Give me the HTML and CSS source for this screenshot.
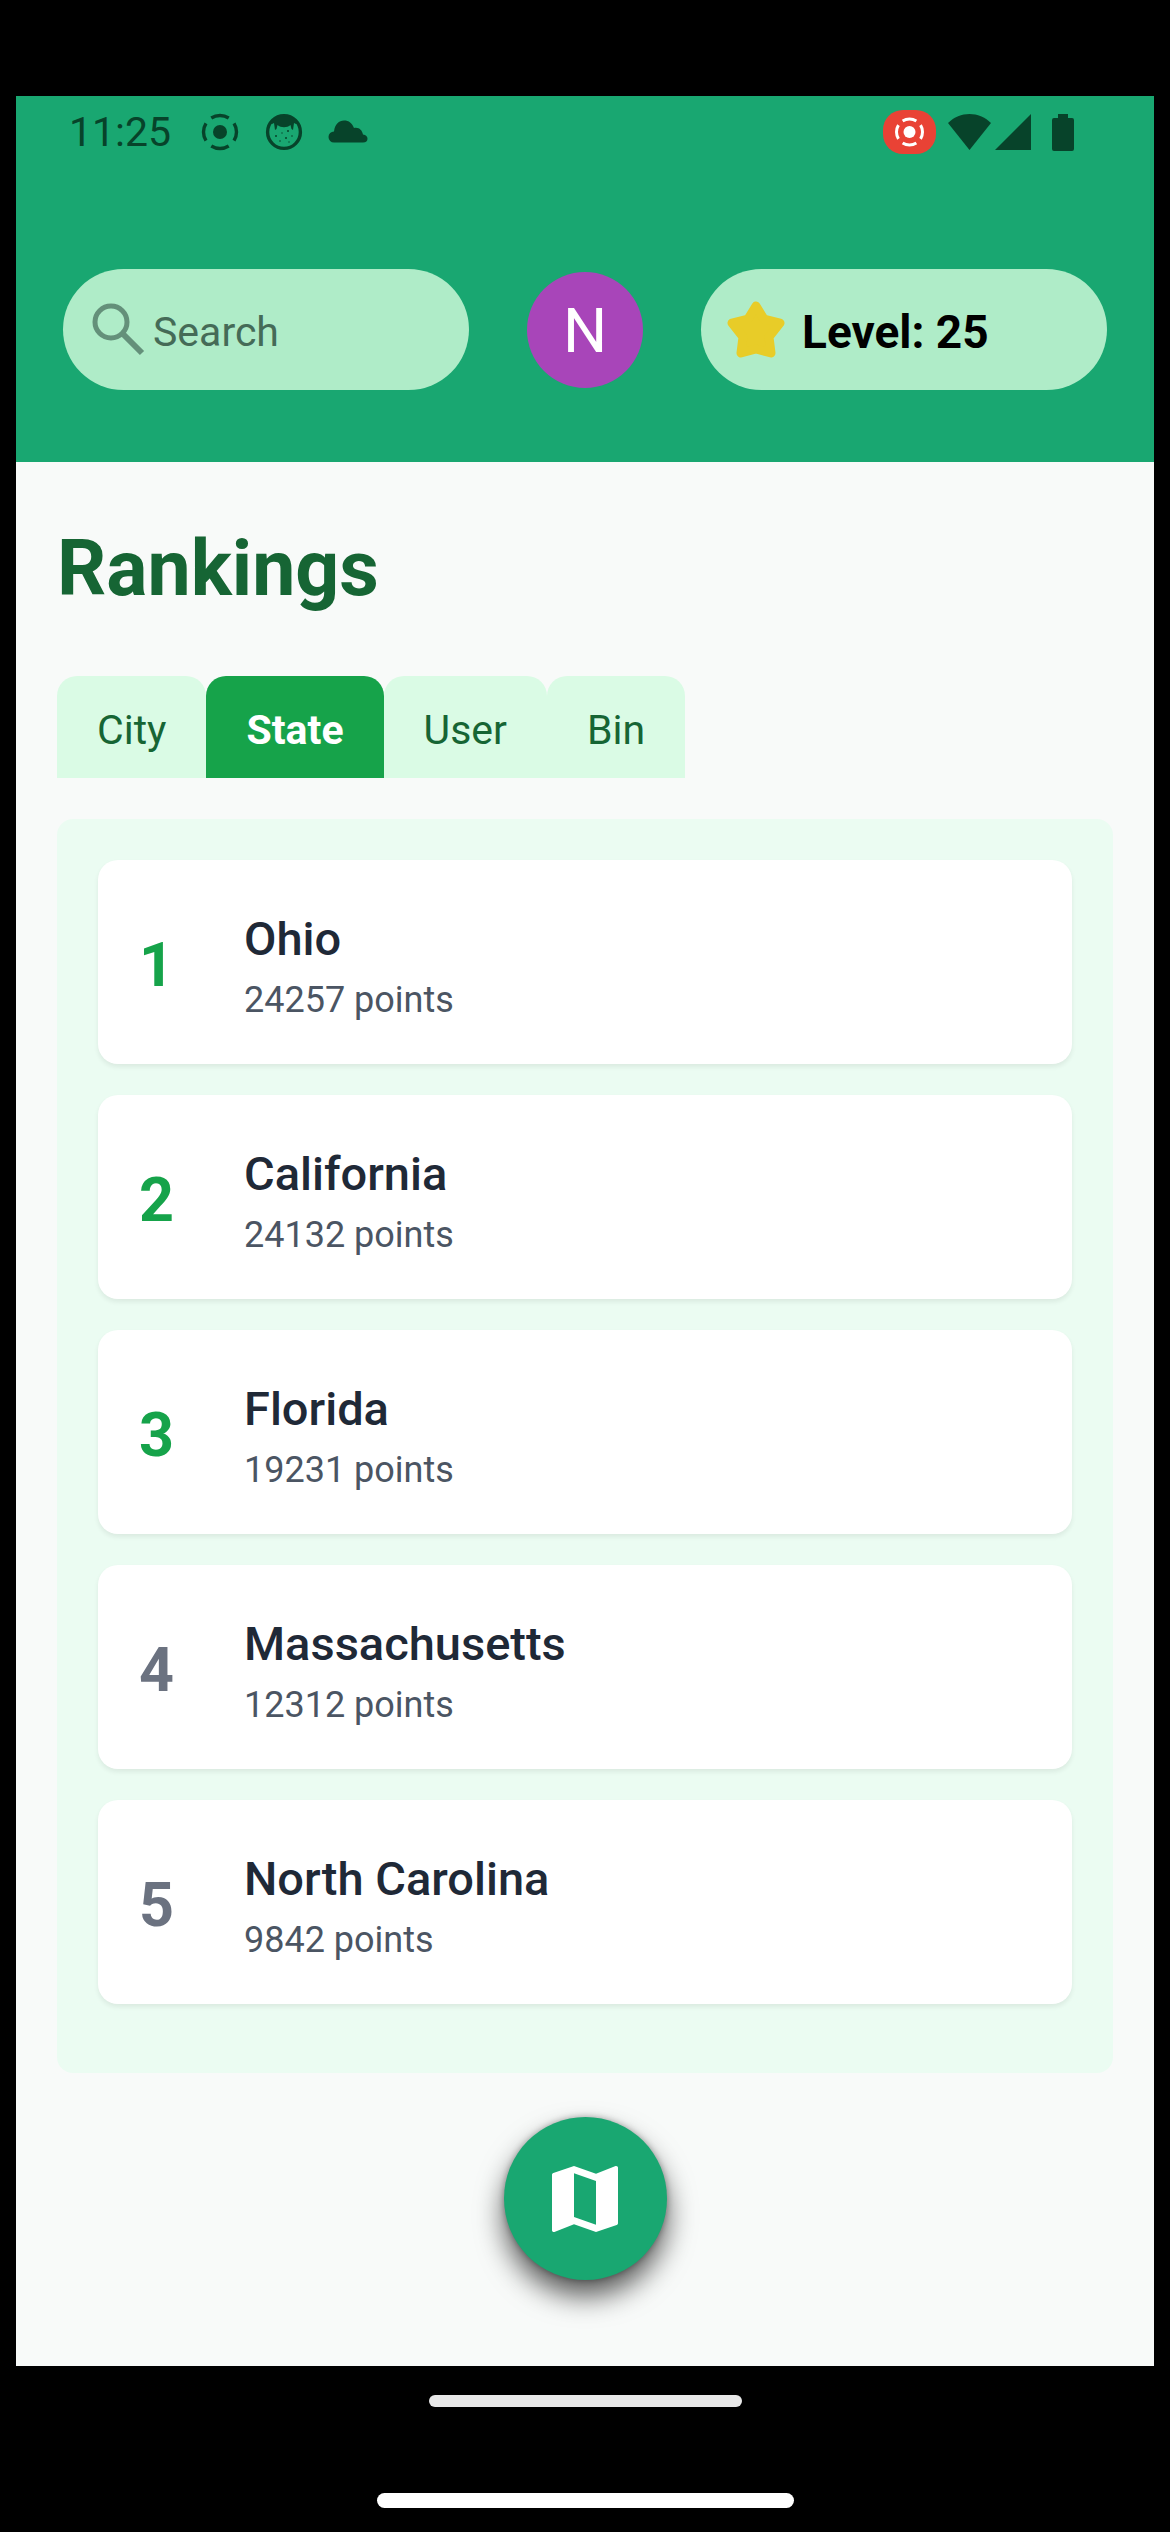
FILE: index.html
```html
<!DOCTYPE html>
<html lang="en">
<head>
<meta charset="utf-8">
<meta name="viewport" content="width=device-width, initial-scale=1">
<title>Rankings</title>
<link rel="stylesheet" href="styles.css">
</head>
<body>
<div class="screen">
  <header class="header">
    <div class="status">
      <span class="clock">11:25</span>
      <svg class="status-icon" viewBox="0 0 40 40" aria-hidden="true">
        <circle cx="20" cy="20" r="7" fill="currentColor"/>
        <circle cx="20" cy="20" r="16.5" fill="none" stroke="currentColor" stroke-width="3.4" pathLength="360" stroke-dasharray="64 26" stroke-dashoffset="-58"/>
      </svg>
      <svg class="status-icon" viewBox="0 0 40 40" aria-hidden="true">
        <circle cx="20" cy="20" r="16.4" fill="none" stroke="currentColor" stroke-width="3.4"/>
        <path d="M6 11C11 2 29 2 34 11L32 12L30 11L29 18L27.500 17L26.500 13C23 16 17 16 13.500 13L12.500 17L11 18L10 11L8 12Z" fill="currentColor"/>
        <g fill="currentColor"><circle cx="12" cy="24" r="1"/><circle cx="24" cy="19" r="1"/><circle cx="18" cy="21" r=".7"/><circle cx="28" cy="24" r=".8"/><circle cx="22" cy="26" r="1"/><circle cx="16" cy="29" r=".8"/><circle cx="25" cy="30" r=".7"/></g>
      </svg>
      <svg class="status-icon" viewBox="0 0 40 40" aria-hidden="true">
        <path d="M6 30.500A5.500 5.500 0 0 1 6 19.500C7 12 11 8.500 16 8.500C21 8.500 24 11 26 16C31 15 34 18 35 22.500C41 23 41 30.500 35 30.500Z" fill="currentColor"/>
      </svg>
      <svg class="record" viewBox="0 0 53 44" aria-hidden="true">
        <rect width="53" height="44" rx="20" fill="#e94235"/>
        <circle cx="26.500" cy="22" r="6" fill="#fff"/>
        <circle cx="26.500" cy="22" r="13" fill="none" stroke="#fff" stroke-width="3" pathLength="360" stroke-dasharray="64 26" stroke-dashoffset="-58"/>
      </svg>
      <svg class="wifi" viewBox="0 0 43 36" aria-hidden="true"><path d="M0 9C12-3 31-3 43 9L21.500 36Z" fill="currentColor"/></svg>
      <svg class="signal" viewBox="0 0 36 36" aria-hidden="true"><path d="M36 0V36H0Z" fill="currentColor"/></svg>
      <svg class="battery" viewBox="0 0 22 37" aria-hidden="true"><path d="M6 0H16V4H20Q22 4 22 6V35Q22 37 20 37H2Q0 37 0 35V6Q0 4 2 4H6Z" fill="currentColor"/></svg>
    </div>
    <div class="toolbar">
      <label class="pill search">
        <svg class="search-icon" viewBox="0 0 54 54" aria-hidden="true"><circle cx="20" cy="19" r="16" fill="none" stroke="currentColor" stroke-width="5"/><path d="M32 31L51 50" stroke="currentColor" stroke-width="6"/></svg>
        <input class="search-input" type="search" placeholder="Search" aria-label="Search">
      </label>
      <button class="avatar" type="button" aria-label="Profile">N</button>
      <div class="pill level">
        <svg class="star" viewBox="0 0 60 58" aria-hidden="true"><path d="M30 5L38 18L54 22L43 36L45 52L30 48L15 52L17 36L6 22L22 18Z" fill="currentColor" stroke="currentColor" stroke-width="9" stroke-linejoin="round"/></svg>
        <span class="level-text">Level: 25</span>
      </div>
    </div>
  </header>
  <main class="main">
    <h1 class="title">Rankings</h1>
    <div class="tabs" role="tablist">
      <button class="tab" type="button" role="tab" aria-selected="false">City</button>
      <button class="tab tab-active" type="button" role="tab" aria-selected="true">State</button>
      <button class="tab" type="button" role="tab" aria-selected="false">User</button>
      <button class="tab" type="button" role="tab" aria-selected="false">Bin</button>
    </div>
    <ol class="panel">
      <li class="card"><span class="rank rank-top">1</span><div class="info"><span class="name">Ohio</span><span class="points">24257 points</span></div></li>
      <li class="card"><span class="rank rank-top">2</span><div class="info"><span class="name">California</span><span class="points">24132 points</span></div></li>
      <li class="card"><span class="rank rank-top">3</span><div class="info"><span class="name">Florida</span><span class="points">19231 points</span></div></li>
      <li class="card"><span class="rank">4</span><div class="info"><span class="name">Massachusetts</span><span class="points">12312 points</span></div></li>
      <li class="card"><span class="rank">5</span><div class="info"><span class="name">North Carolina</span><span class="points">9842 points</span></div></li>
    </ol>
    <button class="fab" type="button" aria-label="Open map">
      <svg class="map-icon" viewBox="0 0 24 24" aria-hidden="true"><path fill="currentColor" d="M20.500 3l-.16.030L15 5.100 9 3 3.360 4.900c-.21.070-.36.250-.36.480V20.500c0 .28.220.5.500.5l.16-.03L9 18.900l6 2.100 5.640-1.900c.21-.07.360-.25.360-.48V3.500c0-.28-.22-.5-.5-.5zM15 19l-6-2.110V5l6 2.110V19z"/></svg>
    </button>
  </main>
</div>
<div class="system">
  <div class="handle"></div>
  <div class="home"></div>
</div>
</body>
</html>
```
FILE: styles.css
```css
* {
  box-sizing: border-box;
}

body {
  margin: 0;
  min-height: 100vh;
  padding: 96px 16px 24px;
  display: flex;
  flex-direction: column;
  background: #000;
  font-family: Roboto, "Liberation Sans", sans-serif;
}

button,
input {
  font: inherit;
  border: 0;
}

svg {
  display: block;
  flex: none;
}

.screen {
  flex: 1;
  background: #f8faf9;
}

.header {
  background: #19a771;
  padding-bottom: 72px;
}

.status {
  display: flex;
  align-items: center;
  height: 72px;
  padding: 0 80px 0 53px;
  color: #07432a;
}

.clock {
  font-size: 41px;
  line-height: 48px;
  margin-right: 5px;
}

.status-icon {
  width: 40px;
  height: 40px;
  margin-left: 24px;
}

.record {
  width: 53px;
  height: 44px;
  margin-left: auto;
}

.wifi {
  width: 43px;
  height: 36px;
  margin-left: 12px;
}

.signal {
  width: 36px;
  height: 36px;
  margin-left: 4px;
}

.battery {
  width: 22px;
  height: 37px;
  margin-left: 21px;
}

.toolbar {
  display: grid;
  grid-template-columns: 1fr auto 1fr;
  align-items: center;
  gap: 58px;
  padding: 101px 47px 0;
}

.pill {
  min-width: 0;
  height: 121px;
  display: flex;
  align-items: center;
  border-radius: 61px;
  background: #afecc8;
}

.search {
  gap: 8px;
  padding: 0 28px;
}

.search-icon {
  width: 54px;
  height: 54px;
  color: #64907a;
}

.search-input {
  flex: 1;
  min-width: 0;
  padding: 4px 0 0;
  background: none;
  outline: none;
  appearance: none;
  font-size: 41px;
  line-height: 48px;
  color: #456b57;
}

.search-input::placeholder {
  color: #456b57;
  opacity: 1;
}

.avatar {
  width: 116px;
  height: 116px;
  padding: 2px 0 0;
  border-radius: 50%;
  background: #a845b9;
  color: #fff;
  font-size: 62px;
  line-height: 72px;
}

.level {
  gap: 16px;
  padding: 0 25px;
  color: #000;
}

.level-text {
  padding-top: 5px;
  font-size: 46px;
  line-height: 54px;
  font-weight: 700;
}

.star {
  width: 60px;
  height: 58px;
  color: #e8cc28;
}

.main {
  display: flex;
  flex-direction: column;
  padding: 62px 41px 86px;
}

.title {
  margin: 0 0 62px;
  font-size: 77px;
  line-height: 90px;
  font-weight: 700;
  color: #166534;
}

.tabs {
  display: flex;
  margin-bottom: 41px;
}

.tab {
  height: 102px;
  padding: 5px 40px 0;
  border-radius: 20px 20px 0 0;
  background: #dafbe5;
  color: #166534;
  font-size: 41px;
  line-height: 48px;
}

.tab-active {
  background: #16a34a;
  color: #fff;
  font-weight: 700;
}

.panel {
  display: flex;
  flex-direction: column;
  gap: 31px;
  margin: 0 0 44px;
  padding: 41px 41px 69px;
  list-style: none;
  border-radius: 16px;
  background: #ebfcf2;
}

.card {
  display: flex;
  align-items: center;
  padding: 52px 41px 43px;
  border-radius: 20px;
  background: #fff;
  box-shadow: 0 3px 5px rgba(0, 0, 0, 0.07);
}

.rank {
  width: 105px;
  padding-bottom: 3px;
  font-size: 61px;
  line-height: 72px;
  font-weight: 700;
  color: #6b7280;
}

.rank-top {
  color: #16a34a;
}

.info {
  display: flex;
  flex-direction: column;
  gap: 13px;
}

.name {
  font-size: 47px;
  line-height: 54px;
  font-weight: 500;
  color: #1f2937;
}

.points {
  font-size: 36px;
  line-height: 42px;
  color: #4b5563;
}

.fab {
  align-self: center;
  display: flex;
  align-items: center;
  justify-content: center;
  width: 163px;
  height: 163px;
  padding: 0;
  border-radius: 50%;
  background: #19a771;
  color: #fff;
  box-shadow: 0 16px 28px rgba(0, 0, 0, 0.65), 0 0 6px rgba(0, 0, 0, 0.3);
}

.map-icon {
  width: 88px;
  height: 88px;
}

.system {
  display: flex;
  flex-direction: column;
  align-items: center;
  gap: 86px;
  padding-top: 29px;
}

.handle {
  width: 313px;
  height: 12px;
  border-radius: 6px;
  background: #e8e8e8;
}

.home {
  width: 417px;
  height: 15px;
  border-radius: 8px;
  background: #fff;
}
```
